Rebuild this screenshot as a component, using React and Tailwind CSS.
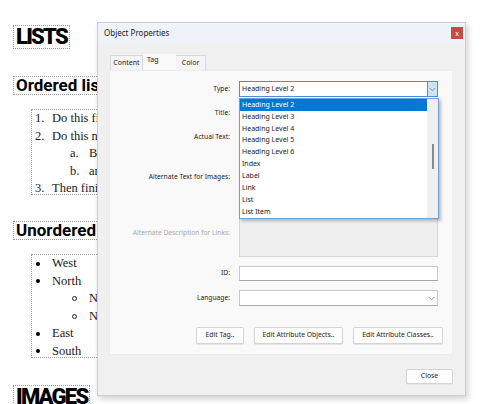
import React from "react";

const ui = { fontFamily: '"Noto Sans", "Open Sans", sans-serif' };
const serif = { fontFamily: '"Liberation Serif", serif' };
const head = { fontFamily: 'Roboto, "Liberation Sans", sans-serif' };

const types = [
  "Heading Level 2",
  "Heading Level 3",
  "Heading Level 4",
  "Heading Level 5",
  "Heading Level 6",
  "Index",
  "Label",
  "Link",
  "List",
  "List Item",
];

function Chevron({ className = "" }) {
  return (
    <svg width="7" height="5" viewBox="0 0 7 5" className={className}>
      <path d="M0.8 1 L3.5 3.8 L6.2 1" fill="none" stroke="#8a8a8a" strokeWidth="0.9" />
    </svg>
  );
}

function Row({ label, h, mt, gray, children }) {
  return (
    <div className="flex items-center">
      <div
        className={`w-[129px] shrink-0 pr-[9px] text-right text-[6.7px] whitespace-nowrap ${gray ? "text-[#a8a8a8]" : "text-[#1e1a22]"} ${mt} ${h} flex items-center justify-end`}
      >
        {label}
      </div>
      <div className={`${mt} ${h} w-[199px] shrink-0`}>{children}</div>
    </div>
  );
}

function Btn({ children, w }) {
  return (
    <div
      className={`${w} h-[17px] flex items-center justify-center rounded-[2px] border border-[#d4d4d4] bg-[#fdfdfd] text-[6.8px] text-[#1e1a22] shadow-[0_1px_0_#e6e6e6]`}
    >
      {children}
    </div>
  );
}

function Dialog() {
  return (
    <div
      className="absolute left-[97px] top-[22px] w-[369px] h-[374px] border border-[#cdcdcd] bg-[#f0f0f0] shadow-[2px_3px_6px_rgba(0,0,0,0.18)] flex flex-col"
      style={ui}
    >
      {/* title bar */}
      <div className="h-[20px] bg-[#eef2f9] flex items-center justify-between pl-[6px] pr-[2px]">
        <span className="text-[8px] text-[#222]">Object Properties</span>
        <div className="w-[12px] h-[12px] bg-[#c94848] flex items-center justify-center text-[7px] text-white leading-none">
          x
        </div>
      </div>

      <div className="pl-[11px] pr-[12px] flex flex-col">
        {/* tabs */}
        <div className="mt-[11px] h-[16px] flex items-end pl-[1px] text-[7px] text-[#1e1a22]">
          <div className="h-[15px] w-[33px] border border-b-0 border-[#dadada] bg-[#f4f4f4] flex items-center justify-center">
            Content
          </div>
          <div className="h-[16px] w-[33px] bg-[#f9f9f9] flex items-start pl-[4px] pt-[1px]">Tag</div>
          <div className="h-[15px] w-[30px] border border-b-0 border-l-0 border-[#dadada] bg-[#f4f4f4] flex items-center justify-center">
            Color
          </div>
        </div>

        {/* panel */}
        <div className="relative h-[285px] bg-[#f9f9f9] border border-[#ececec] flex flex-col">
          <Row label="Type:" h="h-[16px]" mt="mt-[10px]">
            <div className="h-full border border-[#4d8fd6] bg-white flex items-center">
              <span className="flex-1 pl-[2px] text-[7px] text-[#1e1a22]">Heading Level 2</span>
              <div className="w-[10px] h-full bg-[#cde4f7] border-l border-[#4d8fd6] flex items-center justify-center">
                <Chevron />
              </div>
            </div>
          </Row>
          <Row label="Title:" h="h-[16px]" mt="mt-[8px]">
            <div className="h-full border border-[#cfcfcf] bg-white" />
          </Row>
          <Row label="Actual Text:" h="h-[16px]" mt="mt-[8px]">
            <div className="h-full border border-[#cfcfcf] bg-white" />
          </Row>
          <Row label="Alternate Text for Images:" h="h-[48px]" mt="mt-[8px]">
            <div className="h-full border border-[#cfcfcf] bg-white" />
          </Row>
          <Row label="Alternate Description for Links:" h="h-[48px]" mt="mt-[8px]" gray>
            <div className="h-full border border-[#d6d6d6] bg-[#efefef]" />
          </Row>
          <Row label="ID:" h="h-[15px]" mt="mt-[9px]">
            <div className="h-full border border-[#c8c8c8] border-b-[#a8a8a8] bg-white" />
          </Row>
          <Row label="Language:" h="h-[16px]" mt="mt-[9px]">
            <div className="h-full border border-[#c8c8c8] border-b-[#a8a8a8] bg-white flex items-center justify-end pr-[2px]">
              <Chevron />
            </div>
          </Row>

          <div className="mt-[21px] flex pl-[86px] gap-[10px]">
            <Btn w="w-[48px]">Edit Tag..</Btn>
            <Btn w="w-[89px]">Edit Attribute Objects..</Btn>
            <Btn w="w-[90px]">Edit Attribute Classes..</Btn>
          </div>

          {/* dropdown list overlay */}
          <div className="absolute left-[129px] top-[27px] w-[200px] h-[121px] border border-[#6fa0d8] bg-white shadow-[2px_2px_3px_rgba(0,0,0,0.25)] flex">
            <div className="flex-1 flex flex-col">
              {types.map((t, i) => (
                <div
                  key={t}
                  className={`h-[12px] flex items-center pl-[2px] text-[7px] ${
                    i === 0 ? "bg-[#0078d7] text-white" : "text-[#1e1a22]"
                  }`}
                >
                  {t}
                </div>
              ))}
            </div>
            <div className="w-[11px] bg-[#f0f0f0] relative">
              <div className="absolute left-[5px] top-[45px] w-[2px] h-[25px] bg-[#8b8b8b]" />
            </div>
          </div>
        </div>

        {/* close */}
        <div className="mt-[14px] flex justify-end">
          <div className="w-[47px] h-[15px] flex items-center justify-center rounded-[2px] border border-[#d4d4d4] bg-[#fdfdfd] text-[6.8px] text-[#1e1a22] shadow-[0_1px_0_#e6e6e6]">
            Close
          </div>
        </div>
      </div>
    </div>
  );
}

export default function App() {
  return (
    <div className="relative w-[484px] h-[404px] overflow-hidden bg-white">
      <div className="flex flex-col items-start pl-[13px]">
        <div
          className="mt-[25px] h-[24px] border border-dotted border-[#9a9a9a] px-[2px] flex items-center text-[22px] font-black tracking-[-0.08em] text-black leading-none"
          style={head}
        >
          LISTS
        </div>
        <div
          className="mt-[27px] h-[19px] border border-dotted border-[#9a9a9a] pl-[2px] pr-[10px] flex items-center text-[17px] font-bold text-black leading-none whitespace-nowrap"
          style={head}
        >
          Ordered lists
        </div>
        <div
          className="ml-[18px] mt-[14px] w-[120px] h-[86px] border border-dotted border-[#9a9a9a] text-[12.5px] text-[#1a1a1a] leading-[17.5px] whitespace-nowrap"
          style={serif}
        >
          <div className="flex"><span className="w-[20px] pl-[3px]">1.</span><span>Do this first</span></div>
          <div className="flex"><span className="w-[20px] pl-[3px]">2.</span><span>Do this next</span></div>
          <div className="flex pl-[38px]"><span className="w-[19px]">a.</span><span>Both</span></div>
          <div className="flex pl-[38px]"><span className="w-[19px]">b.</span><span>and</span></div>
          <div className="flex"><span className="w-[20px] pl-[3px]">3.</span><span>Then finish</span></div>
        </div>
        <div
          className="mt-[26px] h-[19px] border border-dotted border-[#9a9a9a] pl-[2px] pr-[10px] flex items-center text-[17px] font-bold text-black leading-none whitespace-nowrap"
          style={head}
        >
          Unordered lists
        </div>
        <div
          className="ml-[18px] mt-[14px] w-[120px] h-[104px] border border-dotted border-[#9a9a9a] text-[12.5px] text-[#1a1a1a] leading-[17.5px] whitespace-nowrap"
          style={serif}
        >
          {["West", "North"].map((w) => (
            <div key={w} className="flex items-center">
              <span className="w-[20px] pl-[4px] flex"><span className="w-[4px] h-[4px] rounded-full bg-black" /></span>
              <span>{w}</span>
            </div>
          ))}
          {["Northwest", "Northeast"].map((w) => (
            <div key={w} className="flex items-center pl-[40px]">
              <span className="w-[17px] flex"><span className="w-[5px] h-[5px] rounded-full border border-[#222]" /></span>
              <span>{w}</span>
            </div>
          ))}
          {["East", "South"].map((w) => (
            <div key={w} className="flex items-center">
              <span className="w-[20px] pl-[4px] flex"><span className="w-[4px] h-[4px] rounded-full bg-black" /></span>
              <span>{w}</span>
            </div>
          ))}
        </div>
        <div
          className="mt-[27px] h-[24px] border border-dotted border-[#9a9a9a] px-[2px] flex items-center text-[22px] font-black tracking-[-0.08em] text-black leading-none"
          style={head}
        >
          IMAGES
        </div>
      </div>
      <Dialog />
    </div>
  );
}
